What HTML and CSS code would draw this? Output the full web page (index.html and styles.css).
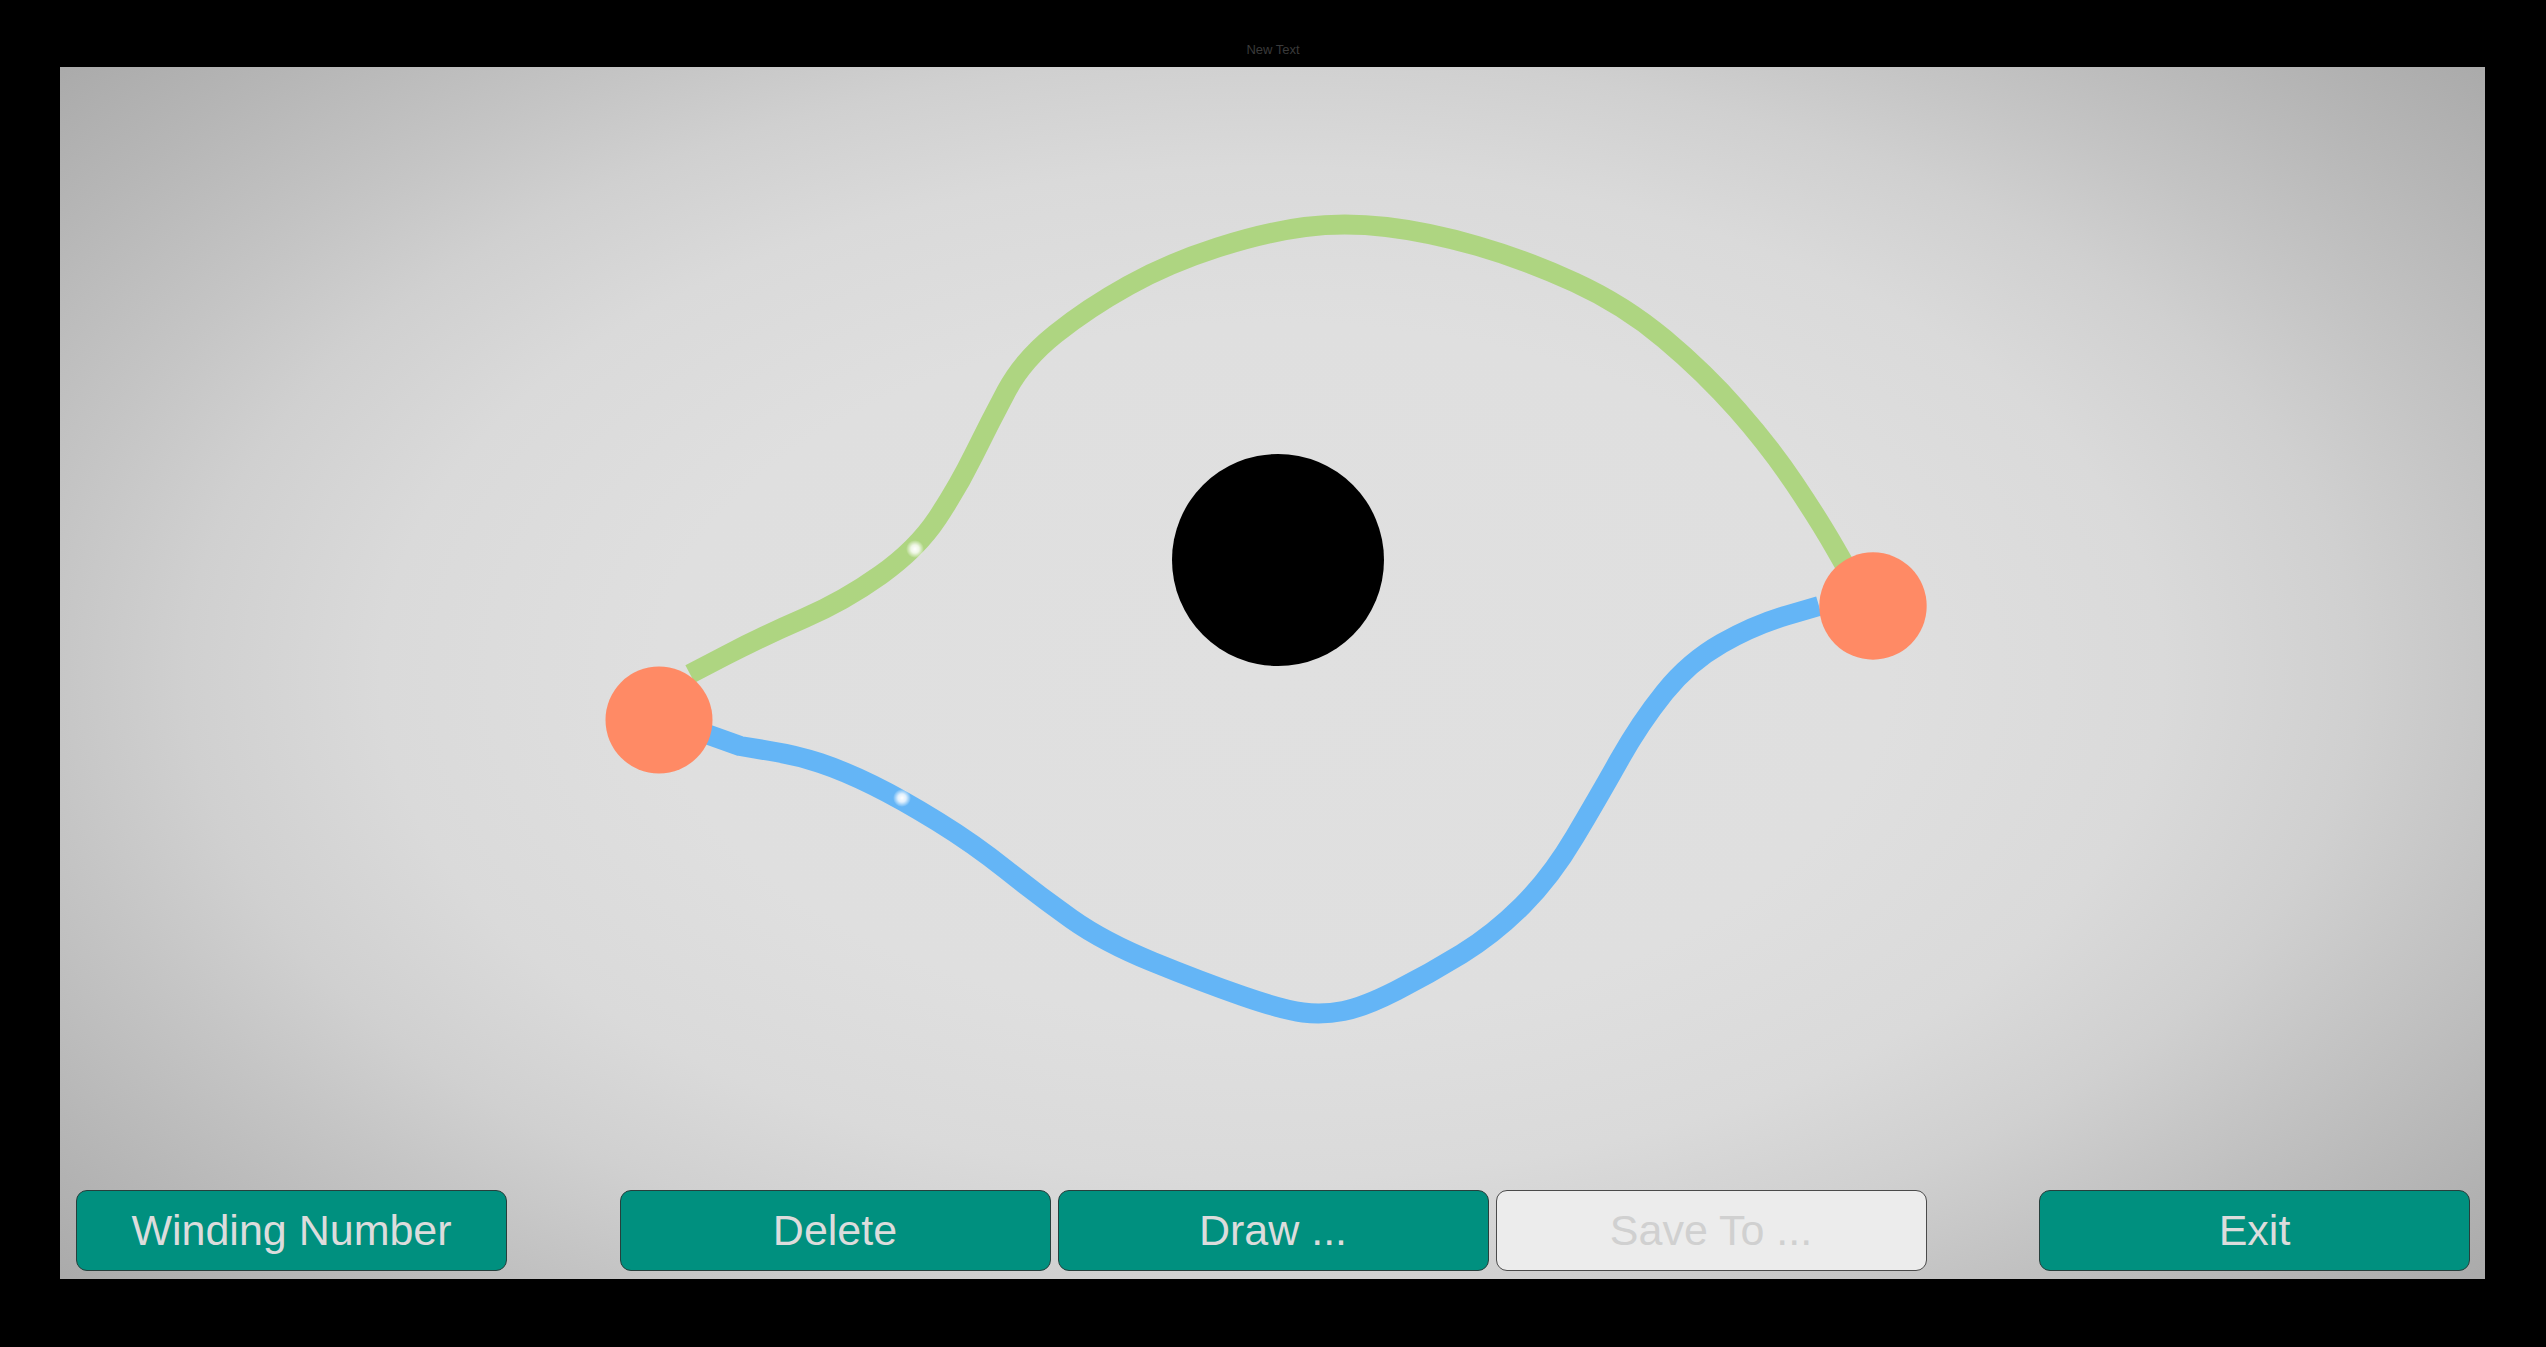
FILE: index.html
```html
<!DOCTYPE html>
<html lang="en">
<head>
<meta charset="utf-8">
<title>Winding Number</title>
<link rel="stylesheet" href="styles.css">
</head>
<body>
<header class="top-bar"><span class="title-text">New Text</span></header>
<main class="stage">
  <svg class="drawing" viewBox="60 67 2425 1212" width="2425" height="1212" xmlns="http://www.w3.org/2000/svg">
    <defs>
      <radialGradient id="glow">
        <stop offset="0" stop-color="#ffffff" stop-opacity="1"/>
        <stop offset="0.45" stop-color="#ffffff" stop-opacity="0.8"/>
        <stop offset="1" stop-color="#ffffff" stop-opacity="0"/>
      </radialGradient>
    </defs>
    <path class="curve curve-green" d="M690,674 L726.5,655 Q763,636 803.5,618.5 Q844,601 880.5,575 Q917,549 937.5,518 Q958,487 974,454.5 Q990,422 1006.5,391 Q1023,360 1055.5,334 Q1088,308 1128.5,285.5 Q1169,263 1217.5,247.5 Q1266,232 1305,227 Q1344,222 1386.5,227 Q1429,232 1477.5,246 Q1526,260 1575,282.5 Q1624,305 1664.5,339 Q1705,373 1737.5,410 Q1770,447 1794.5,483.5 Q1819,520 1835,548 L1851,576"/>
    <path class="curve curve-blue" d="M698,731 L740,746 L770,751 Q796,755 820,763 Q844,771 872.5,785 Q901,799 937.5,821.5 Q974,844 1006.5,870 Q1039,896 1071.5,919 Q1104,942 1153,962 Q1202,982 1242.5,996 Q1283,1010 1303,1012.5 Q1323,1015 1343.5,1011 Q1364,1007 1396.5,990.5 Q1429,974 1461.5,954 Q1494,934 1522.5,905.5 Q1551,877 1575,836.5 Q1599,796 1619.5,759.5 Q1640,723 1664.5,692.5 Q1689,662 1721.5,643.5 Q1754,625 1786.5,615.5 L1819,606"/>
    <circle cx="915" cy="549" r="9" fill="url(#glow)"/>
    <circle cx="902" cy="798" r="9" fill="url(#glow)"/>
    <circle class="obstacle" cx="1278" cy="560" r="106"/>
    <circle class="endpoint" cx="659" cy="720" r="53.5"/>
    <circle class="endpoint" cx="1873" cy="606" r="53.7"/>
  </svg>
  <nav class="toolbar">
    <button class="btn">Winding Number</button>
    <div class="btn-group">
      <button class="btn">Delete</button>
      <button class="btn">Draw ...</button>
      <button class="btn btn-disabled">Save To ...</button>
    </div>
    <button class="btn">Exit</button>
  </nav>
</main>
</body>
</html>
```
FILE: styles.css
```css
html, body {
  margin: 0;
  padding: 0;
  background: #000;
  width: 2546px;
  height: 1347px;
  overflow: hidden;
  font-family: "Liberation Sans", Arial, sans-serif;
}

.top-bar {
  height: 67px;
  display: flex;
  justify-content: center;
  align-items: flex-start;
  box-sizing: border-box;
  padding-top: 42px;
}

.title-text {
  font-size: 13px;
  line-height: 16px;
  color: #3a3a3a;
}

.stage {
  position: relative;
  margin-left: 60px;
  width: 2425px;
  height: 1212px;
  display: flex;
  flex-direction: column;
  background: radial-gradient(1620px 920px at 50% 50%, #e0e0e0 0%, #dfdfdf 38%, #dadada 55%, #d0d0d0 67%, #c5c5c5 76%, #b6b6b6 89%, #aaaaaa 100%);
}

.drawing {
  position: absolute;
  left: 0;
  top: 0;
}

.curve {
  fill: none;
  stroke-width: 20;
  stroke-linejoin: round;
  stroke-linecap: butt;
}

.curve-green { stroke: #aed581; }
.curve-blue { stroke: #64b5f6; }
.obstacle { fill: #000; }
.endpoint { fill: #ff8a65; }

.toolbar {
  position: relative;
  margin-top: auto;
  display: flex;
  justify-content: space-between;
  align-items: center;
  padding: 0 15px 8px 16px;
}

.btn-group {
  display: flex;
  gap: 7px;
}

.btn {
  width: 431px;
  height: 81px;
  box-sizing: border-box;
  border: 1.5px solid #263f3c;
  border-radius: 11px;
  background: #00907f;
  color: #dcdcdc;
  font-family: "Liberation Sans", Arial, sans-serif;
  font-size: 43px;
  padding: 0;
  display: flex;
  align-items: center;
  justify-content: center;
}

.btn-disabled {
  background: #ececec;
  color: #d0d0d0;
  border-color: #4a4a4a;
}
```
